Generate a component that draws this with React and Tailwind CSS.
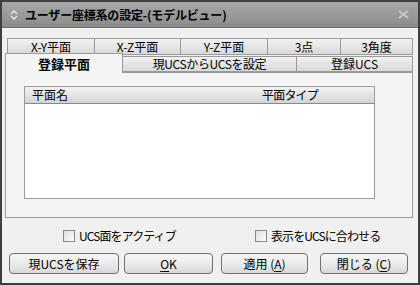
import React from "react";

const font = { fontFamily: '"MS UI Gothic", "Noto Sans CJK JP", sans-serif' };

function Tab({ w, children }) {
  return (
    <div
      className={`${w} h-full flex items-center justify-center border border-[#9a9a9a] -ml-px first:ml-0 bg-gradient-to-b from-[#f2f2f2] to-[#d9d9d9] text-[12px] text-black leading-none`}
    >
      {children}
    </div>
  );
}

function Check({ label }) {
  return (
    <div className="flex items-center gap-[4px]">
      <div className="w-[12px] h-[12px] border border-[#8a8a8a] bg-gradient-to-br from-[#dcdcdc] to-white" />
      <span className="text-[12px] leading-none text-black tracking-[-0.9px]">{label}</span>
    </div>
  );
}

function Button({ w, ml, children }) {
  return (
    <div
      className={`${w} ${ml} h-[21px] flex items-center justify-center rounded-[4px] border border-[#707070] bg-gradient-to-b from-[#f6f6f6] via-[#ebebeb] to-[#d8d8d8] text-[12px] leading-none text-black`}
    >
      {children}
    </div>
  );
}

export default function App() {
  return (
    <div className="w-[420px] h-[285px] bg-[#3f3f3f] p-[2px] flex flex-col" style={font}>
      {/* Title bar */}
      <div className="h-[26px] flex items-center bg-gradient-to-b from-[#a8a8a8] to-[#8c8c8c] border-b border-[#6a6a6a]">
        <svg className="ml-[7px]" width="10" height="12" viewBox="0 0 10 12" fill="none">
          <path d="M2 5 L5 2 L8 5" stroke="#e8e8e8" strokeWidth="1.5" />
          <path d="M2 7 L5 10 L8 7" stroke="#e8e8e8" strokeWidth="1.5" />
        </svg>
        <span className="ml-[6px] text-[12px] font-bold text-black leading-none tracking-[-0.2px]">
          ユーザー座標系の設定-(モデルビュー)
        </span>
        <svg className="ml-auto mr-[9px]" width="11" height="9" viewBox="0 0 11 9">
          <path d="M1 1 L10 8 M10 1 L1 8" stroke="#c6c6c6" strokeWidth="2" />
        </svg>
      </div>

      {/* Body */}
      <div className="flex-1 bg-[#f0f0f0] border-t border-[#f8f8f8] flex flex-col">
        <div className="ml-[3px] w-[408px] mt-[9px]">
          {/* tab row 1 */}
          <div className="h-[17px] flex pl-[2px]">
            <Tab w="w-[88px]">X-Y平面</Tab>
            <Tab w="w-[87px]">X-Z平面</Tab>
            <Tab w="w-[88px]">Y-Z平面</Tab>
            <Tab w="w-[74px]">3点</Tab>
            <Tab w="w-[73px]">3角度</Tab>
          </div>
          {/* tab row 2 */}
          <div className="h-[17px] flex items-end">
            <div className="relative z-10 w-[118px] h-[20px] -mb-px flex items-center justify-center border border-b-0 border-[#9a9a9a] bg-[#f4f4f4] text-[13px] font-bold leading-none text-black">
              登録平面
            </div>
            <div className="w-[175px] -ml-px h-[16px] flex items-center justify-center border border-[#9a9a9a] bg-gradient-to-b from-[#f2f2f2] to-[#d9d9d9] text-[12px] leading-none tracking-[-0.4px]">
              現UCSからUCSを設定
            </div>
            <div className="w-[117px] -ml-px h-[16px] flex items-center justify-center border border-[#9a9a9a] bg-gradient-to-b from-[#f2f2f2] to-[#d9d9d9] text-[12px] leading-none">
              登録UCS
            </div>
          </div>
          {/* panel */}
          <div className="h-[146px] border border-[#9a9a9a] bg-[#f4f4f4] pt-[13px] pl-[18px]">
            <div className="w-[351px] h-[113px] border border-[#9c9c9c] bg-white flex flex-col">
              <div className="h-[17px] flex border-b border-[#8a8a8a] bg-gradient-to-b from-[#f4f4f4] to-[#d4d4d4] text-[12px] leading-none text-black">
                <div className="w-[233px] flex items-center pl-[7px]">平面名</div>
                <div className="flex-1 flex items-center pl-[4px] tracking-[-0.8px]">平面タイプ</div>
              </div>
            </div>
          </div>
        </div>

        {/* checkboxes */}
        <div className="mt-[12px] flex">
          <div className="w-[253px] pl-[61px]">
            <Check label="UCS面をアクティブ" />
          </div>
          <Check label="表示をUCSに合わせる" />
        </div>

        {/* buttons */}
        <div className="mt-[11px] flex">
          <Button w="w-[110px]" ml="ml-[7px]">現UCSを保存</Button>
          <Button w="w-[89px]" ml="ml-[5px]">
            <span className="underline underline-offset-2">O</span>K
          </Button>
          <Button w="w-[87px]" ml="ml-[8px]">
            適用 (<span className="underline underline-offset-2">A</span>)
          </Button>
          <Button w="w-[88px]" ml="ml-[12px]">
            閉じる (<span className="underline underline-offset-2">C</span>)
          </Button>
        </div>
      </div>
    </div>
  );
}
